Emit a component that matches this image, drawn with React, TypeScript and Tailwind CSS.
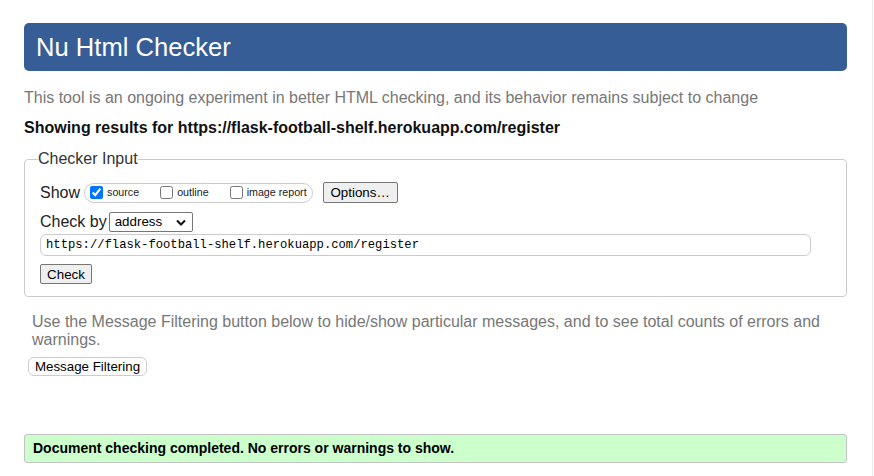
import { useState } from "react";

function App() {
    const [show, setShow] = useState({
        "source": true,
        "outline": false,
        "image report": false,
    });

    const toggle = (name: keyof typeof show) => {
        setShow({
            ...show,
            [name]: !show[name],
        });
    };

    return (
        <div className="w-[873px] min-h-[476px] border-r border-[#ececec] bg-white font-['Liberation_Sans',Arial,sans-serif] text-[#222]">
            <div className="w-[847px] pl-[24px] pt-[23px]">
                <h1 className="flex h-[48px] items-center rounded-[5px] bg-[#365d95] pl-[12px] text-[25.6px] leading-[30px] font-normal text-white">
                    Nu Html Checker
                </h1>
                <p className="mt-[18px] text-[16px] leading-[18px] text-[#777]">
                    This tool is an ongoing experiment in better HTML checking, and its behavior remains subject to change
                </p>
                <p className="mt-[12px] text-[16px] leading-[18px] font-bold text-[#111]">
                    Showing results for https://flask-football-shelf.herokuapp.com/register
                </p>

                <fieldset className="mt-[13px] rounded-[4px] border border-[#ccc] px-[15px] pb-[10px]">
                    <legend className="-ml-[2px] text-[16px] leading-[18px] text-[#333]">Checker Input</legend>

                    <div className="mt-[14px] flex h-[21px] items-center">
                        <span className="text-[16px] leading-[18px]">Show</span>
                        <div className="ml-[4px] flex h-[20px] items-center gap-[21px] rounded-full border border-[#ccc] px-[5px]">
                            {(Object.keys(show) as (keyof typeof show)[]).map((name) => (
                                <label key={name} className="flex items-center">
                                    <input
                                        type="checkbox"
                                        className="m-0 h-[13px] w-[13px]"
                                        checked={show[name]}
                                        onChange={() => toggle(name)}
                                    />
                                    <span className="ml-[4px] text-[10.7px] leading-[13px]">{name}</span>
                                </label>
                            ))}
                        </div>
                        <button className="ml-[10px] h-[21px] w-[75px] rounded-[2px] border border-[#767676] bg-[#efefef] text-[13.33px] text-black">
                            Options…
                        </button>
                    </div>

                    <div className="mt-[9px] flex h-[20px] items-center">
                        <span className="text-[16px] leading-[18px]">Check by</span>
                        <div className="ml-[2px] flex h-[20px] w-[84px] items-center justify-between rounded-[2px] border border-[#767676] bg-white pl-[5px] pr-[6px] text-[13.33px] text-black">
                            <span>address</span>
                            <svg width="10" height="7" viewBox="0 0 10 7" fill="none">
                                <path d="M1 1.5 L5 5.5 L9 1.5" stroke="#111" strokeWidth="2" />
                            </svg>
                        </div>
                    </div>

                    <div className="mt-[2px] flex h-[22px] w-[771px] items-center rounded-[6px] border border-[#ccc] pl-[5px] font-['Liberation_Mono',monospace] text-[12.2px] text-black">
                        https://flask-football-shelf.herokuapp.com/register
                    </div>

                    <button className="mt-[8px] h-[20px] w-[52px] rounded-[2px] border border-[#767676] bg-[#efefef] text-[13.33px] text-black">
                        Check
                    </button>
                </fieldset>

                <p className="mt-[16px] ml-[8px] text-[16px] leading-[18.4px] text-[#777]">
                    Use the Message Filtering button below to hide/show particular messages, and to see total counts of errors and warnings.
                </p>
                <button className="mt-[7px] ml-[4px] h-[19px] w-[119px] rounded-[6px] border border-[#ccc] bg-white text-[13.33px] leading-[15px] text-black">
                    Message Filtering
                </button>

                <div className="mt-[56px] flex h-[29px] items-center rounded-[3px] border border-[#c4c4c4] bg-[#ccffcc] px-[8px] text-[14px] font-bold text-black">
                    Document checking completed. No errors or warnings to show.
                </div>
            </div>
        </div>
    );
}

export default App;
